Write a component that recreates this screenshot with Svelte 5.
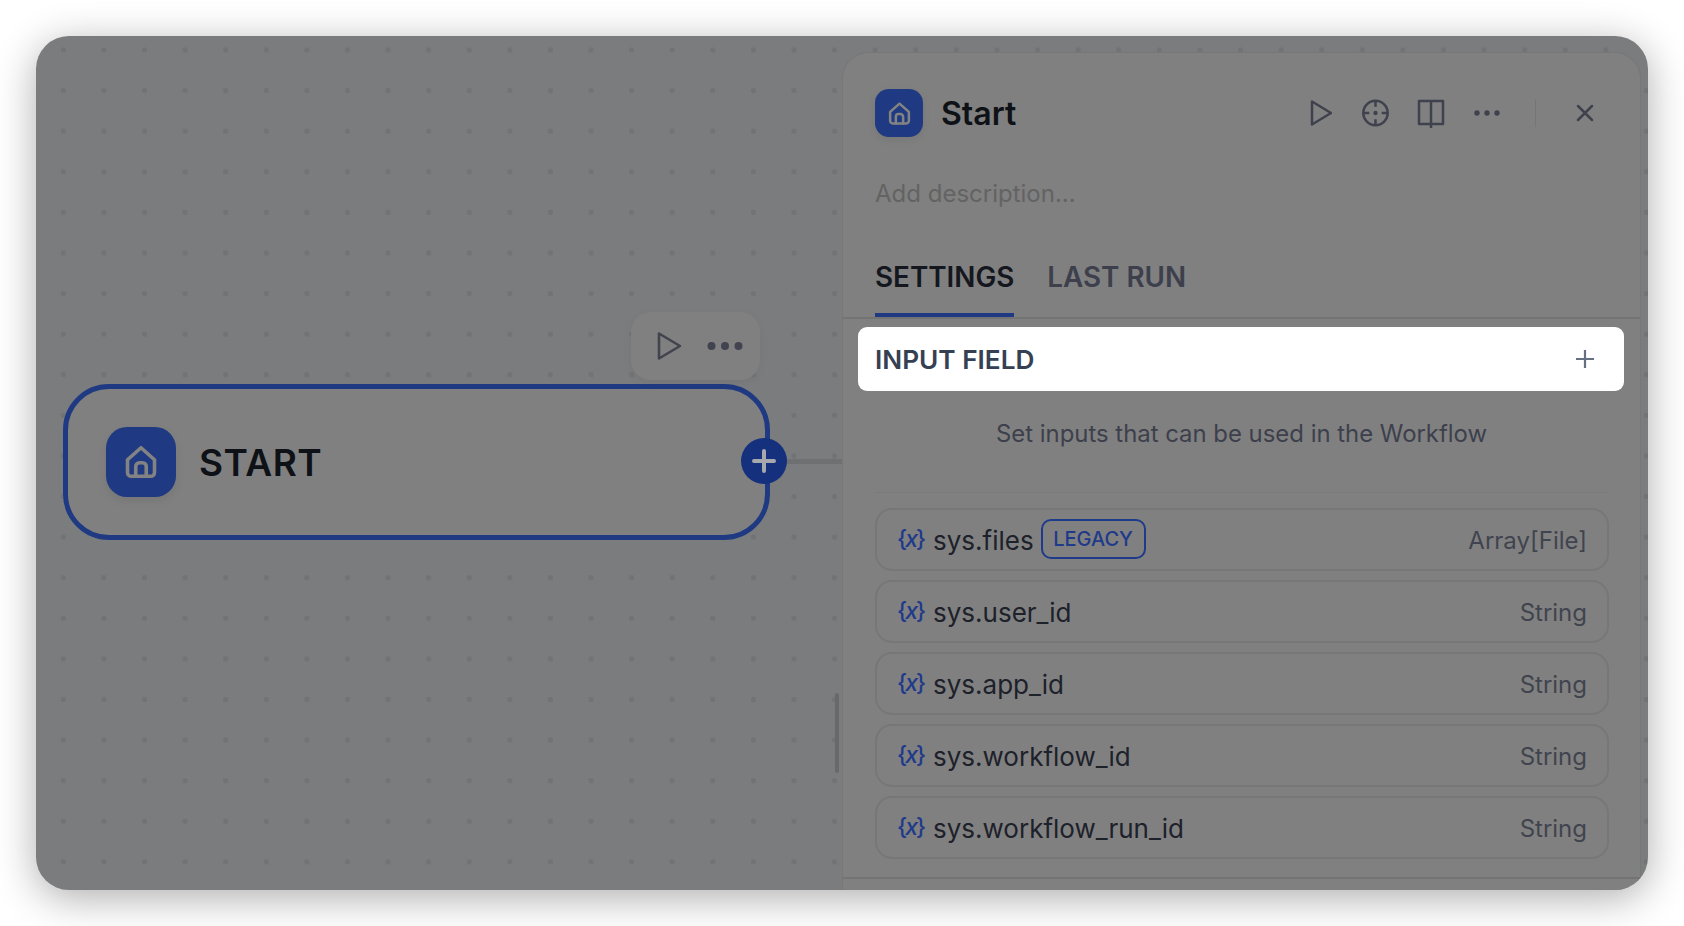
<script>
  const rows = [
    { name: 'sys.files', type: 'Array[File]', legacy: true },
    { name: 'sys.user_id', type: 'String' },
    { name: 'sys.app_id', type: 'String' },
    { name: 'sys.workflow_id', type: 'String' },
    { name: 'sys.workflow_run_id', type: 'String' }
  ];
</script>

{#snippet home(size)}
  <svg class="home" width={size} height={size} viewBox="0 0 24 24" fill="none" stroke="#838383" stroke-width="2.4" stroke-linejoin="round" stroke-linecap="round">
    <path d="M3 10.5 12 2.5l9 8V19a2.5 2.5 0 0 1-2.5 2.5h-13A2.5 2.5 0 0 1 3 19z" />
    <path d="M8.5 21.5V15a2.5 2.5 0 0 1 2.5-2.5h2a2.5 2.5 0 0 1 2.5 2.5v6.500" />
  </svg>
{/snippet}

<div class="page">
  <div class="window">
    <div class="node">
      <div class="node-icon">{@render home(36)}</div>
      <span class="node-title">START</span>
    </div>
    <div class="connector"></div>
    <div class="add">
      <svg width="24" height="24" viewBox="0 0 24 24" stroke="#a6a8ae" stroke-width="4" stroke-linecap="round"><path d="M12 2v20M2 12h20" /></svg>
    </div>
    <div class="node-tools">
      <svg width="26" height="30" viewBox="0 0 26 30" fill="none" stroke="#41444f" stroke-width="2.600" stroke-linejoin="round"><path d="M3 2.500v25L24 15z" /></svg>
      <svg width="36" height="10" viewBox="0 0 36 10" fill="#41444f"><circle cx="4.500" cy="5" r="4" /><circle cx="18" cy="5" r="4" /><circle cx="31.500" cy="5" r="4" /></svg>
    </div>
    <div class="handle"></div>

    <aside class="panel">
      <header class="head">
        <div class="head-icon">{@render home(25)}</div>
        <h1>Start</h1>
        <div class="actions">
          <span class="btn"><svg width="24" height="28" viewBox="0 0 24 28" fill="none" stroke="#3f424d" stroke-width="2.500" stroke-linejoin="round"><path d="M4 2.500v23L23 14z" /></svg></span>
          <span class="btn"><svg width="30" height="30" viewBox="0 0 30 30" fill="none" stroke="#3f424d" stroke-width="2.500"><circle cx="14.500" cy="15" r="12.200" /><path d="M14.500 2.800v6M14.500 21.200v6M2.300 15h6M20.700 15h6" /><circle cx="14.500" cy="15" r="2.200" fill="#3f424d" stroke="none" /></svg></span>
          <span class="btn"><svg width="28" height="30" viewBox="0 0 28 30" fill="none" stroke="#3f424d" stroke-width="2.500" stroke-linejoin="round"><path d="M2 3h24v23H2zM14 3v27" /></svg></span>
          <span class="btn"><svg width="26" height="6" viewBox="0 0 26 6" fill="#3f424d"><circle cx="3" cy="3" r="2.700" /><circle cx="13" cy="3" r="2.700" /><circle cx="23" cy="3" r="2.700" /></svg></span>
          <span class="sep"></span>
          <span class="btn"><svg width="18" height="18" viewBox="0 0 18 18" stroke="#3f424d" stroke-width="2.500" stroke-linecap="round"><path d="M2 2l14 14M16 2 2 16" /></svg></span>
        </div>
      </header>

      <p class="desc">Add description...</p>

      <nav class="tabs">
        <span class="tab active">SETTINGS</span>
        <span class="tab">LAST RUN</span>
      </nav>

      <section class="input-card">
        <span>INPUT FIELD</span>
        <svg width="20" height="20" viewBox="0 0 20 20" stroke="#676f83" stroke-width="2.200"><path d="M10 1v18M1 10h18" /></svg>
      </section>

      <p class="hint">Set inputs that can be used in the Workflow</p>
      <div class="rule"></div>

      <ul class="vars">
        {#each rows as r}
          <li class="var">
            <span class="x">&#123;<i>x</i>&#125;</span>
            <span class="name">{r.name}</span>
            {#if r.legacy}<span class="badge">LEGACY</span>{/if}
            <span class="type">{r.type}</span>
          </li>
        {/each}
      </ul>
      <div class="foot"></div>
    </aside>
  </div>
</div>

<style>
  :global(body) { margin: 0; background: #fff; }
  .page {
    width: 1684px;
    height: 926px;
    padding: 36px 36px 36px;
    box-sizing: border-box;
    font-family: Inter, "Noto Sans", sans-serif;
    overflow: hidden;
  }
  .window {
    position: relative;
    height: 100%;
    border-radius: 33px;
    background-color: #7b7c7e;
    background-image: radial-gradient(circle, #727376 0 2.500px, transparent 3px);
    background-size: 40.6px 40.6px;
    background-position: 7px -6.3px;
    box-shadow: 0 8px 40px rgba(0, 0, 0, 0.32);
    display: flex;
    justify-content: flex-end;
    padding: 16px 7px 0 0;
    box-sizing: border-box;
    overflow: hidden;
  }

  .node {
    position: absolute;
    left: 27px;
    top: 348px;
    width: 707px;
    height: 156px;
    box-sizing: border-box;
    border: 5px solid #1f3a82;
    border-radius: 46px;
    background: #808080;
    display: flex;
    align-items: center;
    padding-left: 38px;
    gap: 23px;
  }
  .node-icon {
    width: 70px;
    height: 70px;
    border-radius: 21px;
    background: #1f3a82;
    box-shadow: 0 4px 10px rgba(0, 0, 0, 0.08);
    display: flex;
    align-items: center;
    justify-content: center;
  }
  .node-title {
    font-size: 37px;
    font-weight: 600;
    color: #0e1116;
    letter-spacing: 0.5px;
  }
  .connector {
    position: absolute;
    left: 750px;
    top: 423px;
    width: 60px;
    height: 5px;
    background: #6f7072;
  }
  .add {
    position: absolute;
    left: 705px;
    top: 402px;
    width: 46px;
    height: 46px;
    border-radius: 50%;
    background: #15307c;
    display: flex;
    align-items: center;
    justify-content: center;
  }
  .node-tools {
    position: absolute;
    left: 595px;
    top: 276px;
    width: 129px;
    height: 68px;
    border-radius: 20px;
    background: #808080;
    box-shadow: 0 3px 10px rgba(0, 0, 0, 0.05);
    display: flex;
    align-items: center;
    gap: 25px;
    padding-left: 25px;
    box-sizing: border-box;
  }
  .handle {
    position: absolute;
    left: 799px;
    top: 657px;
    width: 4px;
    height: 80px;
    border-radius: 2px;
    background: #68696b;
  }

  .panel {
    position: relative;
    width: 799px;
    height: 100%;
    box-sizing: border-box;
    background: #808080;
    border: 1px solid #777;
    border-bottom: 0;
    border-radius: 26px 26px 0 0;
    padding-top: 36px;
    display: flex;
    flex-direction: column;
  }
  .head {
    display: flex;
    align-items: center;
    height: 48px;
    padding: 0 27px 0 32px;
  }
  .head-icon {
    width: 48px;
    height: 48px;
    border-radius: 14px;
    background: #1f3a82;
    box-shadow: 0 3px 8px rgba(0, 0, 0, 0.08);
    display: flex;
    align-items: center;
    justify-content: center;
    margin-right: 18px;
  }
  h1 {
    margin: 0;
    font-size: 32px;
    font-weight: 600;
    color: #0e1116;
  }
  .actions {
    margin-left: auto;
    display: flex;
    align-items: center;
  }
  .btn {
    width: 55.700px;
    display: flex;
    justify-content: center;
    align-items: center;
  }
  .sep {
    width: 1.500px;
    height: 28px;
    background: #757575;
    margin: 0 21px 0 20px;
  }
  .desc {
    margin: 42px 32px 0;
    font-size: 24px;
    line-height: 30px;
    color: #636363;
  }
  .tabs {
    margin-top: 51px;
    display: flex;
    gap: 33px;
    padding: 0 32px;
    border-bottom: 2px solid #747474;
    height: 57px;
  }
  .tab {
    font-size: 27.800px;
    line-height: 34px;
    font-weight: 600;
    color: #3d404c;
    height: 57px;
    box-sizing: border-box;
  }
  .tab.active {
    color: #14171e;
    border-bottom: 4px solid #1f3a82;
  }
  .input-card {
    margin: 8px 16px 0 15px;
    height: 64px;
    border-radius: 9px;
    background: #fff;
    display: flex;
    align-items: center;
    justify-content: space-between;
    padding: 0 29px 0 17px;
    font-size: 26.200px;
    font-weight: 600;
    color: #354052;
  }
  .hint {
    margin: 28px 0 0;
    text-align: center;
    font-size: 23.900px;
    line-height: 30px;
    color: #3d404c;
  }
  .rule {
    margin: 43px 31px 0 32px;
    height: 1px;
    background: #7b7b7b;
  }
  .vars {
    list-style: none;
    margin: 15px 31px 0 32px;
    padding: 0;
    display: flex;
    flex-direction: column;
    gap: 9.500px;
  }
  .var {
    height: 62.500px;
    box-sizing: border-box;
    border: 2px solid #777778;
    border-radius: 17px;
    display: flex;
    align-items: center;
    padding: 2px 20px 0;
  }
  .x {
    color: #1f3a8a;
    font-size: 23px;
    font-weight: 500;
    letter-spacing: -2px;
    width: 36px;
    flex: none;
    margin-top: -3px;
  }
  .name {
    font-size: 26px;
    color: #1d212a;
  }
  .badge {
    margin-left: 7px;
    height: 40px;
    box-sizing: border-box;
    border: 2.500px solid #1f3a8a;
    border-radius: 10px;
    padding: 0 10.500px;
    display: flex;
    align-items: center;
    font-size: 20px;
    font-weight: 500;
    color: #1f3a8a;
    margin-top: -2px;
  }
  .type {
    margin-left: auto;
    font-size: 24px;
    color: #40444f;
  }
  .foot {
    margin-top: 18.500px;
    height: 1.500px;
    background: #747474;
  }
</style>
